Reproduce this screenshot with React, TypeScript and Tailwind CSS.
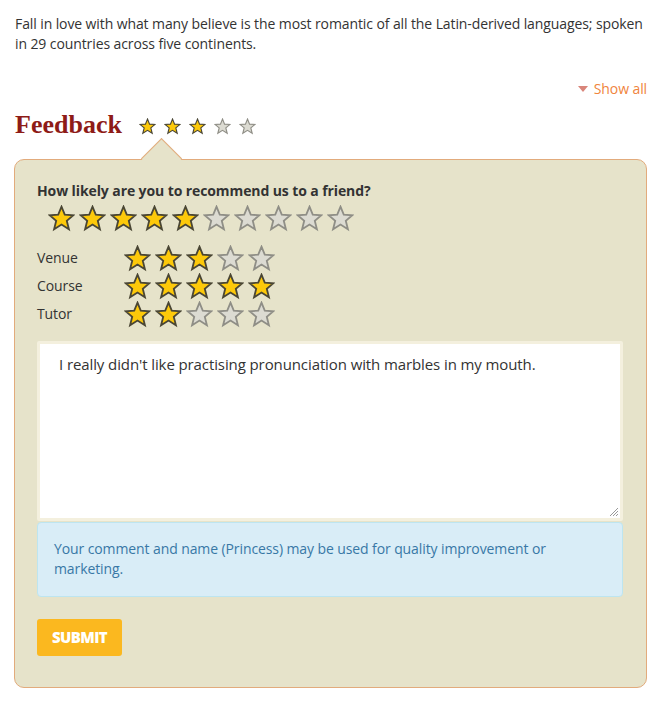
import React from "react";

const Star = ({ on, size }: { on: boolean; size: number }) => (
  <svg width={size} height={size} viewBox="0 0 24 24" className="shrink-0">
    <polygon
      points="12,1.5 14.9,8.6 22.6,9.1 16.7,14 18.6,21.6 12,17.4 5.4,21.6 7.3,14 1.4,9.1 9.1,8.6"
      fill={on ? "#fdc90a" : "#dcdbd2"}
      stroke={on ? "#4a4634" : "#8f8e86"}
      strokeWidth={1.6}
      strokeLinejoin="miter"
    />
  </svg>
);

const StarRow = ({ value, total, size, gap }: { value: number; total: number; size: number; gap: string }) => (
  <div className={"flex items-center " + gap}>
    {Array.from({ length: total }).map((_, i) => (
      <Star key={i} on={i < value} size={size} />
    ))}
  </div>
);

export default function App() {
  const ratings = [
    { label: "Venue", value: 3 },
    { label: "Course", value: 5 },
    { label: "Tutor", value: 2 },
  ];

  return (
    <div className="w-[662px] min-h-[706px] bg-white px-[15px] pt-[14px] text-[#333] tracking-[-0.1px] font-['Open_Sans',sans-serif]">
      <p className="text-[14px] leading-[20px]">
        Fall in love with what many believe is the most romantic of all the Latin-derived languages; spoken in 29 countries across five continents.
      </p>

      <div className="mt-[25px] flex justify-end items-center text-[14px] leading-[20px] text-[#f0843c]">
        <span className="mr-[6px] inline-block w-0 h-0 border-l-[5px] border-r-[5px] border-t-[6px] border-l-transparent border-r-transparent border-t-[#d9857a]" />
        Show all
      </div>

      <div className="mt-[8px] flex items-center h-[36px]">
        <h2 className="font-['Liberation_Serif',serif] font-bold text-[26px] leading-[36px] tracking-normal text-[#8e1b17]">Feedback</h2>
        <div className="ml-[17px] mt-[2px]">
          <StarRow value={3} total={5} size={17} gap="gap-[8px]" />
        </div>
      </div>

      <div className="relative mt-[16px] -ml-px w-[633px] rounded-[10px] border border-[#e2ab7c] bg-[#e6e3ca] px-[22px] pt-[21px] pb-[31px]">
        <div className="absolute top-[-16px] left-[132px] w-[29px] h-[29px] rotate-45 border-t border-l border-[#e2ab7c] bg-[#e6e3ca]" />

        <div className="relative">
          <div className="text-[14px] leading-[20px] font-bold text-[#333]">How likely are you to recommend us to a friend?</div>
          <div className="mt-[3px] ml-[11px] h-[28px] flex items-center">
            <StarRow value={5} total={10} size={27} gap="gap-[4px]" />
          </div>

          <div className="mt-[12px] flex flex-col">
            {ratings.map((r) => (
              <div key={r.label} className="flex items-center h-[28px]">
                <div className="w-[87px] text-[14px] leading-[20px]">{r.label}</div>
                <StarRow value={r.value} total={5} size={27} gap="gap-[4px]" />
              </div>
            ))}
          </div>

          <div className="mt-[13px] h-[180px] w-[586px] border-[3px] border-[#f4f0de] bg-white rounded-[2px] px-[19px] pt-[8px] relative">
            <p className="text-[15px] leading-[24px] text-[#333]">
              I really didn't like practising pronunciation with marbles in my mouth.
            </p>
            <svg className="absolute right-[1px] bottom-[1px]" width="11" height="11" viewBox="0 0 11 11">
              <path d="M10 2 L2 10 M10 5 L5 10 M10 8 L8 10" stroke="#999" strokeWidth="1" />
            </svg>
          </div>

          <div className="mt-[1px] w-[586px] rounded-[4px] border border-[#bde5f0] bg-[#d9edf7] px-[16px] pt-[16px] pb-[17px] text-[14px] leading-[20px] text-[#3878a6]">
            Your comment and name (Princess) may be used for quality improvement or marketing.
          </div>

          <button className="mt-[22px] w-[85px] h-[37px] rounded-[3px] bg-[#fbb81f] text-white font-extrabold text-[15px] tracking-[-0.6px] uppercase">
            Submit
          </button>
        </div>
      </div>
    </div>
  );
}
